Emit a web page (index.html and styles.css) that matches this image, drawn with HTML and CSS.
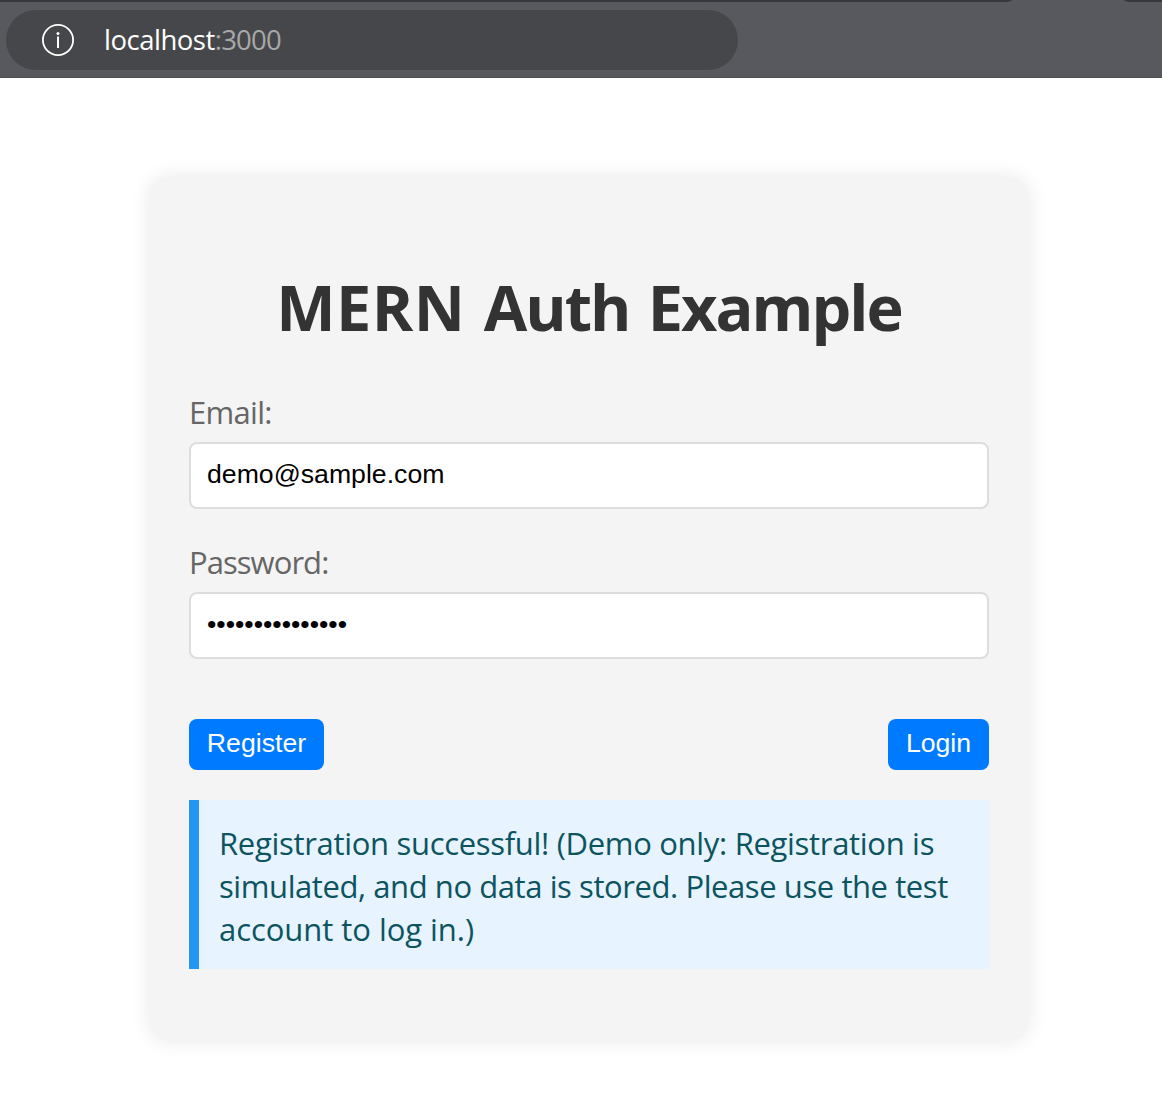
FILE: index.html
```html
<!DOCTYPE html>
<html lang="en">
<head>
<meta charset="utf-8">
<title>MERN Auth Example</title>
<link rel="stylesheet" href="styles.css">
</head>
<body>
<header class="browser">
  <div class="tab-strip"><div class="tabs tabs-left"></div><div class="tabs tabs-right"></div></div>
  <div class="address">
    <svg class="info" width="32" height="32" viewBox="0 0 32 32" fill="none" stroke="#fff"><circle cx="16" cy="16" r="15.1" stroke-width="1.8"/><path d="M16 12.5v11.5" stroke-width="2"/><circle cx="16" cy="9.5" r="1.5" fill="#fff" stroke="none"/></svg>
    <span class="host">localhost</span><span class="port">:3000</span>
  </div>
</header>
<main class="card">
  <h1 class="title"><span class="caps">MERN</span> <span class="word">Auth</span> <span class="word">Example</span></h1>
  <form class="form">
    <label class="label label-email" for="email">Email:</label>
    <input class="input" id="email" type="text" value="demo@sample.com">
    <label class="label label-password" for="password">Password:</label>
    <input class="input" id="password" type="password" value="samplepassword1">
    <div class="actions">
      <button class="button register" type="button">Register</button>
      <button class="button login" type="button">Login</button>
    </div>
  </form>
  <p class="message">
    <span class="line line-one">Registration successful! (Demo only: Registration is</span>
    <span class="line line-two">simulated, and no data is stored. Please use the test</span>
    <span class="line line-three">account to log in.)</span>
  </p>
</main>
</body>
</html>
```
FILE: styles.css
```css
* { box-sizing: border-box; }
body {
  margin: 0;
  height: 1109px;
  overflow: hidden;
  background: #fff;
  font-family: "Open Sans", "Noto Sans", sans-serif;
}
.browser {
  height: 78px;
  background: #58595e;
  border-bottom: 1px solid #4d4e52;
}
.tab-strip { display: flex; justify-content: space-between; height: 2px; }
.tabs { background: #38393d; }
.tabs-left { width: 1012px; border-bottom-right-radius: 8px 2px; }
.tabs-right { width: 38px; border-bottom-left-radius: 8px 2px; }
.address {
  display: flex;
  align-items: center;
  width: 732px;
  height: 60px;
  margin: 8px 0 0 6px;
  padding-left: 36px;
  border-radius: 30px;
  background: #46474a;
  font-size: 27.5px;
  line-height: 60px;
}
.info { margin-right: 30px; }
.host { color: #fff; letter-spacing: -0.5px; }
.port { color: #a8a8a9; letter-spacing: -0.8px; }
.card {
  width: 880px;
  height: 864px;
  margin: 99px 0 0 149px;
  padding: 87px 40px 0;
  border-radius: 20px;
  background: #f4f4f4;
  box-shadow: 0 0 20px rgba(0, 0, 0, 0.09);
}
.title {
  margin: 0;
  color: #333;
  font-size: 63px;
  font-weight: 700;
  line-height: 86px;
  letter-spacing: -1px;
  word-spacing: 3px;
  text-align: center;
  white-space: nowrap;
}
.caps { letter-spacing: 0.4px; }
.word { letter-spacing: -2px; }
.form { display: flex; flex-direction: column; }
.label { color: #666; font-size: 31px; line-height: 43px; }
.label-email { margin-top: 41px; letter-spacing: -0.7px; }
.label-password { margin-top: 32px; letter-spacing: -0.95px; }
.input {
  width: 800px;
  height: 67px;
  margin: 8px 0 0;
  padding: 0 16px 3px;
  border: 2px solid #ddd;
  border-radius: 8px;
  background: #fff;
  color: #000;
  font: 26.667px "Liberation Sans", Arial, sans-serif;
}
.actions { display: flex; justify-content: space-between; margin-top: 60px; }
.button {
  height: 51px;
  padding: 0 0 2px;
  border: 0;
  border-radius: 8px;
  background: #007bff;
  color: #fff;
  font: 26.667px "Liberation Sans", Arial, sans-serif;
}
.register { width: 135px; }
.login { width: 101px; }
.message {
  margin: 30px 0 0;
  padding: 22px 20px 18px;
  border-left: 10px solid #2196f3;
  background: #e7f3fe;
  color: #0c5460;
  font-size: 31px;
  line-height: 43px;
}
.line { display: block; white-space: nowrap; }
.line-one { letter-spacing: -0.31px; }
.line-two { letter-spacing: -0.42px; }
.line-three { letter-spacing: -0.05px; }
```
